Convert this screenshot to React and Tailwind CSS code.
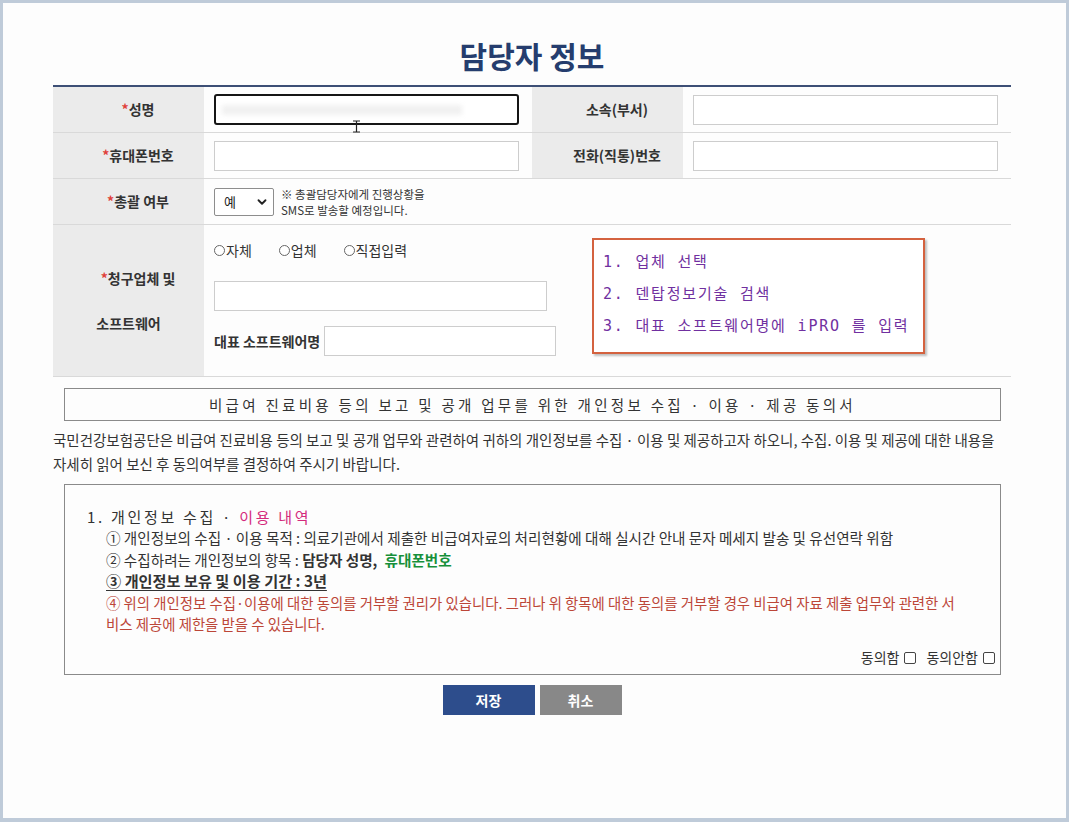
import React from 'react';
import { ChevronDown } from 'lucide-react';

// 필수 항목 표시
function Req({ children }) {
    return (
        <span>
            <span className="text-[#e0413a]">*</span>
            {children}
        </span>
    );
}

function Label({ children }) {
    return (
        <div className="flex items-center justify-center bg-[#ebebeb] pl-[19px] text-[14px] font-semibold text-[#333]">
            {children}
        </div>
    );
}

function Field({ className = '' }) {
    return <div className={`h-[30px] border border-[#cdcdcd] bg-white ${className}`} />;
}

function Radio({ label }) {
    return (
        <span className="flex items-center gap-[1px]">
            <span className="h-[11px] w-[11px] rounded-full border border-[#666] bg-white" />
            <span>{label}</span>
        </span>
    );
}

function Check() {
    return <span className="inline-block h-[12px] w-[12px] rounded-[2px] border border-[#444] bg-white" />;
}

export default function App() {
    return (
        <div className="h-[822px] w-[1069px] bg-[#bfcbd9] pb-[4px] pl-[3px] pr-[3px] pt-[3px] font-['Noto_Sans_CJK_KR',sans-serif]">
            <div className="h-full w-full bg-[#fdfdfd] pl-[50px]">
                <div className="w-[958px]">
                    {/* 제목 */}
                    <div className="h-[82px] pt-[32px] text-center text-[30px] font-bold leading-[40px] text-[#253d6e]">
                        담당자 정보
                    </div>

                    {/* 담당자 입력 표 */}
                    <div className="border-t-2 border-[#3d4f76]">
                        <div className="grid h-[46px] grid-cols-[151px_328px_151px_328px] border-b border-[#d9d9d9]">
                            <Label><Req>성명</Req></Label>
                            <div className="relative flex items-center px-[10px]">
                                <div className="relative h-[31px] w-[305px] rounded-[3px] border-2 border-[#151515] bg-white">
                                    <div className="absolute left-[6px] top-[9px] h-[10px] w-[240px] bg-[#f1f1f1] blur-[2px]" />
                                </div>
                                <svg className="absolute left-[148px] top-[33px]" width="9" height="13" viewBox="0 0 9 13">
                                    <path d="M1 1h7M4.5 1v11M1 12h7" stroke="#222" strokeWidth="1.2" fill="none" />
                                </svg>
                            </div>
                            <Label>소속(부서)</Label>
                            <div className="flex items-center px-[10px]">
                                <Field className="w-[305px]" />
                            </div>
                        </div>

                        <div className="grid h-[46px] grid-cols-[151px_328px_151px_328px] border-b border-[#d9d9d9]">
                            <Label><Req>휴대폰번호</Req></Label>
                            <div className="flex items-center px-[10px]">
                                <Field className="w-[305px]" />
                            </div>
                            <Label>전화(직통)번호</Label>
                            <div className="flex items-center px-[10px]">
                                <Field className="w-[305px]" />
                            </div>
                        </div>

                        <div className="grid h-[46px] grid-cols-[151px_1fr] border-b border-[#d9d9d9]">
                            <Label><Req>총괄 여부</Req></Label>
                            <div className="flex items-center gap-[7px] px-[10px]">
                                <div className="flex h-[28px] w-[60px] items-center justify-between rounded-[2px] border border-[#8d8d8d] bg-white pl-[9px] pr-[4px] text-[13px] text-[#222]">
                                    <span>예</span>
                                    <ChevronDown size={14} strokeWidth={3.2} color="#222" />
                                </div>
                                <div className="text-[11.5px] leading-[16px] text-[#333]">
                                    <div>※ 총괄담당자에게 진행상황을</div>
                                    <div>SMS로 발송할 예정입니다.</div>
                                </div>
                            </div>
                        </div>

                        <div className="grid h-[152px] grid-cols-[151px_1fr] border-b border-[#d9d9d9]">
                            <div className="flex flex-col items-center justify-center gap-[21px] bg-[#ebebeb] text-[14px] font-semibold leading-[24px] text-[#333]">
                                <div className="pl-[19px]"><Req>청구업체 및</Req></div>
                                <div>소프트웨어</div>
                            </div>
                            <div className="flex px-[10px]">
                                <div className="flex w-[342px] shrink-0 flex-col pt-[15px] text-[14px] text-[#333]">
                                    <div className="flex h-[20px] items-center gap-[27px]">
                                        <Radio label="자체" />
                                        <Radio label="업체" />
                                        <Radio label="직접입력" />
                                    </div>
                                    <Field className="mt-[21px] w-[333px]" />
                                    <div className="mt-[15px] flex items-center gap-[4px] whitespace-nowrap">
                                        <span className="font-semibold">대표 소프트웨어명</span>
                                        <Field className="w-[241px]" />
                                    </div>
                                </div>
                                {/* 안내 메모 */}
                                <div className="ml-[36px] mt-[13px] h-[116px] w-[333px] shrink-0 border-2 border-[#d4623f] bg-white pl-[9px] pt-[6px] font-['DejaVu_Sans_Mono','Noto_Sans_CJK_KR',monospace] text-[15px] leading-[32px] tracking-[1.8px] text-[#7030a0] shadow-[2px_2px_2px_rgba(0,0,0,0.25)]">
                                    <div>1. 업체 선택</div>
                                    <div>2. 덴탑정보기술 검색</div>
                                    <div>3. 대표 소프트웨어명에 iPRO 를 입력</div>
                                </div>
                            </div>
                        </div>
                    </div>

                    {/* 동의서 */}
                    <div className="ml-[11px] mt-[11px] flex h-[33px] w-[937px] items-center justify-center whitespace-nowrap border border-[#8a8a8a] text-[14.5px] tracking-[3.3px] text-[#333]">
                        비급여 진료비용 등의 보고 및 공개 업무를 위한 개인정보 수집 · 이용 · 제공 동의서
                    </div>

                    <div className="mt-[7px] whitespace-nowrap text-[14.5px] leading-[24px] text-[#333]">
                        국민건강보험공단은 비급여 진료비용 등의 보고 및 공개 업무와 관련하여 귀하의 개인정보를 수집 · 이용 및 제공하고자 하오니, 수집. 이용 및 제공에 대한 내용을
                        <br />
                        자세히 읽어 보신 후 동의여부를 결정하여 주시기 바랍니다.
                    </div>

                    <div className="ml-[11px] mt-[8px] flex h-[191px] w-[937px] flex-col border border-[#8a8a8a] pl-[22px] pr-[5px] pt-[21px]">
                        <div className="text-[15px] leading-[21px] tracking-[2.7px] text-[#333]">
                            1. 개인정보 수집 · <span className="text-[#d42a7c]">이용 내역</span>
                        </div>
                        <div className="whitespace-nowrap pl-[19px] text-[14.6px] leading-[21.5px] text-[#333]">
                            <div>① 개인정보의 수집 · 이용 목적 : 의료기관에서 제출한 비급여자료의 처리현황에 대해 실시간 안내 문자 메세지 발송 및 유선연락 위함</div>
                            <div>
                                ② 수집하려는 개인정보의 항목 : <b className="font-bold">담당자 성명,</b>{'  '}
                                <b className="ml-[4px] font-bold text-[#16903a]">휴대폰번호</b>
                            </div>
                            <div className="text-[15.2px] font-bold underline underline-offset-[3px]">③ 개인정보 보유 및 이용 기간 : 3년</div>
                            <div className="text-[14.4px] text-[#bc4638]">
                                ④ 위의 개인정보 수집·이용에 대한 동의를 거부할 권리가 있습니다. 그러나 위 항목에 대한 동의를 거부할 경우 비급여 자료 제출 업무와 관련한 서
                                <br />
                                비스 제공에 제한을 받을 수 있습니다.
                            </div>
                        </div>
                        <div className="mt-auto flex items-center justify-end gap-[5px] pb-[6px] text-[14px] text-[#333]">
                            <span>동의함</span>
                            <Check />
                            <span className="ml-[5px]">동의안함</span>
                            <Check />
                        </div>
                    </div>

                    <div className="mt-[10px] flex justify-center gap-[5px] text-[14px] font-bold text-white">
                        <button className="h-[30px] w-[92px] bg-[#2d4d8c]">저장</button>
                        <button className="h-[30px] w-[82px] bg-[#888888]">취소</button>
                    </div>
                </div>
            </div>
        </div>
    );
}
